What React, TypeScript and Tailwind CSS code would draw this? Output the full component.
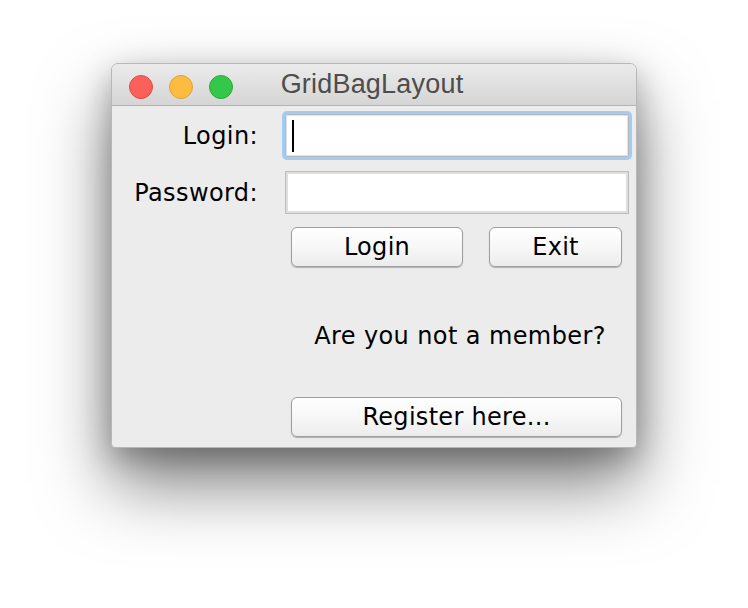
import React from 'react';

// Mac-style Swing window with a GridBagLayout login form
const TrafficLights = () => (
  <div className="absolute left-[17px] top-[11px] flex gap-4">
    <span className="w-6 h-6 rounded-full bg-[#fc605b] border border-[#de4a46]"></span>
    <span className="w-6 h-6 rounded-full bg-[#fdbc40] border border-[#dea236]"></span>
    <span className="w-6 h-6 rounded-full bg-[#34c84a] border border-[#27aa35]"></span>
  </div>
);

const MacButton = ({ label, className = '' }: { label: string; className?: string }) => (
  <button
    className={`h-10 rounded-[6px] border border-[#9e9e9e] bg-linear-to-b from-white via-[#f7f7f7] to-[#ececec] shadow-[0_1px_1px_rgba(0,0,0,0.25)] text-[24px] leading-none tracking-[0.3px] text-black ${className}`}
  >
    {label}
  </button>
);

const App = () => {
  return (
    <div className="w-[748px] h-[608px] bg-white pl-[111px] pt-[63px] font-['DejaVu_Sans',sans-serif]">
      <div className="w-[526px] h-[385px] flex flex-col rounded-t-[7px] rounded-b-[4px] border border-[#b8b8b8] bg-[#ececec] shadow-[0_36px_70px_rgba(0,0,0,0.5),0_10px_30px_rgba(0,0,0,0.25)] overflow-hidden">
        {/* Title bar */}
        <div className="relative h-[42px] shrink-0 flex items-center justify-center bg-linear-to-b from-[#ebebeb] to-[#d5d5d5] border-b border-[#b3b3b3]">
          <TrafficLights />
          <span className="font-['Liberation_Sans',sans-serif] text-[27px] leading-none text-[#4d4d4d] ml-[-4px] tracking-[0.2px]">
            GridBagLayout
          </span>
        </div>

        {/* Form */}
        <div className="grid grid-cols-[146px_344px] gap-x-[27px] pt-[8px] text-[24px] leading-none tracking-[0.4px] text-black">
          <div className="h-[43px] flex items-center justify-end">Login:</div>
          <div className="h-[43px] rounded-[2px] border border-[#b9b9b9] bg-white shadow-[0_0_0_3px_#9fcdf5,inset_0_0_0_1px_#e2e2e2] flex items-center pl-[6px]">
            <span className="w-[2px] h-[32px] bg-black"></span>
          </div>

          <div className="h-[43px] mt-[14px] flex items-center justify-end">Password:</div>
          <div className="h-[43px] mt-[14px] border border-[#bdbdbd] bg-white shadow-[inset_0_0_0_2px_#dedede]"></div>

          <div></div>
          <div className="mt-[13px] flex gap-[26px] pl-[6px] pr-[7px]">
            <MacButton label="Login" className="w-[172px]" />
            <MacButton label="Exit" className="flex-1" />
          </div>

          <div></div>
          <div className="h-[130px] flex items-center justify-center pl-[6px] pt-[7px]">
            Are you not a member?
          </div>

          <div></div>
          <div className="pl-[6px] pr-[7px]">
            <MacButton label="Register here..." className="w-full" />
          </div>
        </div>
      </div>
    </div>
  );
};

export default App;
